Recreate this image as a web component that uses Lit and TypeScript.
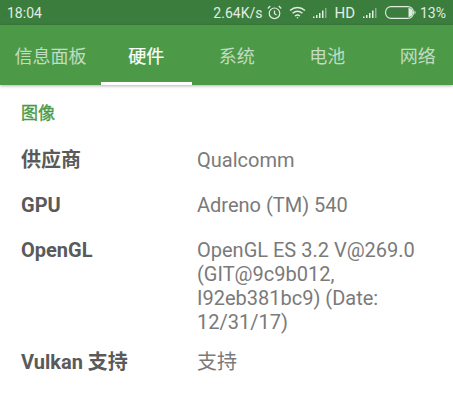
import { LitElement, html, css } from "lit";
import { customElement } from "lit/decorators.js";

const tabs = ["信息面板", "硬件", "系统", "电池", "网络"];
const rows = [
  { k: "供应商", v: ["Qualcomm"] },
  { k: "GPU", v: ["Adreno (TM) 540"] },
  { k: "OpenGL", v: ["OpenGL ES 3.2 V@269.0", "(GIT@9c9b012,", "I92eb381bc9) (Date:", "12/31/17)"] },
  { k: "Vulkan 支持", v: ["支持"] },
];

const signal = html`<svg class="sig" width="15" height="10" viewBox="0 0 15 10">
  <path d="M0 10h1.500V8.500H0zM3 10h1.500V7H3zM6 10h1.500V5H6zM9 10h1.500V2.500H9z" fill="#e6efe6"/>
  <path d="M12 10h1.500V0H12z" fill="#8fb08f"/>
</svg>`;

@customElement("app-root")
export class AppRoot extends LitElement {
  static styles = css`
    :host { display: block; width: 453px; height: 400px; overflow: hidden; background: #fff; font-family: Roboto, "Noto Sans CJK SC", sans-serif; }
    .status { height: 25px; background: #3a7d3c; color: #e3ece3; display: flex; align-items: center; padding: 0 7px 0 7px; font-size: 14px; }
    .time { flex: 1; }
    .icons { display: flex; align-items: center; }
    .speed { margin-right: 5px; }
    .alarm { margin-right: 7px; }
    .wifi { margin-right: 7px; }
    .sig { margin-right: 6px; }
    .hd { margin-right: 8px; font-size: 15px; }
    .batt { margin-right: 4px; margin-left: 1px; }
    .tabs { height: 60px; background: #4c9a48; display: flex; box-shadow: 0 1px 3px rgba(0,0,0,.3); position: relative; }
    .tab { width: 90.500px; flex: none; display: flex; align-items: center; justify-content: center; font-size: 18px; color: #c3dcc1; box-sizing: border-box; }
    .tab.first { width: 101px; }
    .tab.on { color: #fff; -webkit-text-stroke: .2px #fff; border-bottom: 3px solid #fff; padding-top: 3px; }
    .section { color: #4c9a48; font-size: 17px; -webkit-text-stroke: .4px #4c9a48; padding: 18px 0 0 21px; line-height: 20px; }
    .list { padding: 25px 0 0 21px; }
    .row { display: grid; grid-template-columns: 176px 1fr; min-height: 45px; padding-bottom: 16px; box-sizing: border-box; font-size: 20px; line-height: 24px; }
    .k { font-weight: 700; color: #5a5a5a; }
    .v { color: #7a7a7a; }
  `;

  render() {
    return html`
      <div class="status">
        <span class="time">18:04</span>
        <div class="icons">
          <span class="speed">2.64K/s</span>
          <svg class="alarm" width="15" height="15" viewBox="0 0 15 15" fill="none" stroke="#e3ece3">
            <circle cx="7.500" cy="8.300" r="5.300" stroke-width="1.200"/>
            <path d="M7.500 5.500v3.200l2 1.200M.8 3.500 3.200 1M14.200 3.500 11.800 1" stroke-width="1.200"/>
          </svg>
          <svg class="wifi" width="17" height="13" viewBox="0 0 17 13" fill="none" stroke="#e3ece3" stroke-width="1.400">
            <path d="M1 4.500C5.500.5 11.500.5 16 4.500M3.500 7.300c3-2.500 7-2.500 10 0M6 10c1.500-1.200 3.500-1.200 5 0"/>
            <circle cx="8.500" cy="11.800" r=".8" fill="#e3ece3" stroke="none"/>
          </svg>
          ${signal}
          <span class="hd">HD</span>
          ${signal}
          <svg class="batt" width="31" height="13" viewBox="0 0 31 13" fill="none">
            <rect x=".6" y=".6" width="27.800" height="11.800" rx="5.500" stroke="#e3ece3" stroke-width="1.100"/>
            <path d="M24 2h-.5v9h.5c5 0 5-9 0-9z" fill="#e3ece3"/>
            <path d="M29.500 4.500c1.500 1.200 1.500 2.800 0 4z" fill="#e3ece3"/>
          </svg>
          <span>13%</span>
        </div>
      </div>
      <div class="tabs">
        ${tabs.map((t, i) => html`<div class="tab ${i === 0 ? "first" : ""} ${i === 1 ? "on" : ""}">${t}</div>`)}
      </div>
      <div class="section">图像</div>
      <div class="list">
        ${rows.map((r) => html`<div class="row">
          <div class="k">${r.k}</div>
          <div class="v">${r.v.map((l) => html`<div>${l}</div>`)}</div>
        </div>`)}
      </div>
    `;
  }
}
